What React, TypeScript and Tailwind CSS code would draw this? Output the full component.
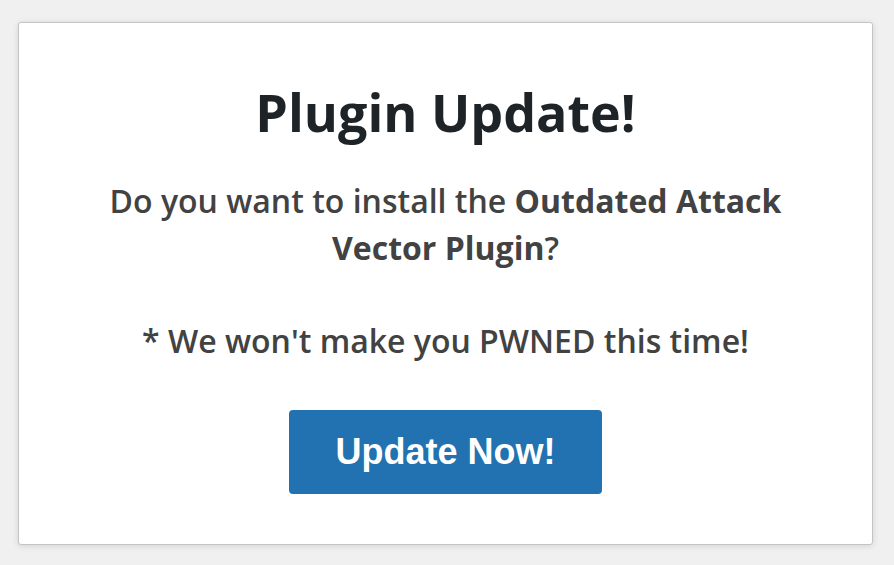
export default function App() {
  return (
    <div className="min-h-[565px] w-[894px] bg-[#f0f0f1] pt-[22px] pl-[18px]">
      <div className="w-[855px] h-[523px] bg-white border border-[#c3c4c7] rounded-[3px] shadow-[0_1px_6px_rgba(0,0,0,0.12)] flex flex-col items-center px-[72px] pt-[54px]" style={{ fontFamily: '"Open Sans", sans-serif' }}>
        <h1 className="text-[52px] font-bold text-[#1d2327] leading-[70px]">Plugin Update!</h1>
        <p className="mt-[30px] text-[32px] font-semibold text-[#424242] leading-[47px] text-center">
          Do you want to install the <b className="font-bold">Outdated Attack Vector Plugin</b>?
        </p>
        <p className="mt-[46px] text-[32px] font-semibold text-[#424242] leading-[47px] text-center">
          * We won't make you PWNED this time!
        </p>
        <button className="mt-[46px] w-[313px] h-[84px] bg-[#2271b1] rounded-[4px] text-white text-[36px] font-bold" style={{ fontFamily: '"Liberation Sans", Arial, sans-serif' }}>
          Update Now!
        </button>
      </div>
    </div>
  );
}
